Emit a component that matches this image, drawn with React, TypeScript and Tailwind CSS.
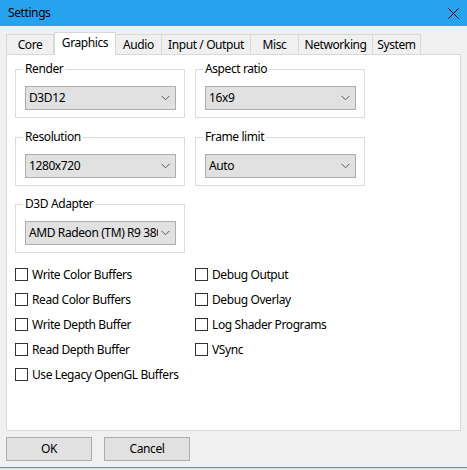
import React from 'react';

const font = { fontFamily: '"Noto Sans", "Segoe UI", sans-serif' };

const tabs = [
  { label: 'Core', w: 'w-[48px]', first: true },
  { label: 'Graphics', w: 'w-[62px]', active: true },
  { label: 'Audio', w: 'w-[46px]' },
  { label: 'Input / Output', w: 'w-[89px]' },
  { label: 'Misc', w: 'w-[48px]' },
  { label: 'Networking', w: 'w-[74px]' },
  { label: 'System', w: 'w-[48px]' },
];

function Chevron() {
  return (
    <svg width="9" height="6" viewBox="0 0 9 6" className="shrink-0">
      <path d="M0.5 0.8 L4.5 4.8 L8.5 0.8" fill="none" stroke="#5a5a5a" strokeWidth="1" />
    </svg>
  );
}

function Combo({ value }: { value: string }) {
  return (
    <div className="flex items-center h-[24px] w-[151px] border border-[#adadad] bg-[#e1e1e1] pl-[3px] pr-[5px]">
      <span className="flex-1 overflow-hidden whitespace-nowrap mr-[3px]">{value}</span>
      <Chevron />
    </div>
  );
}

function Group({ title, value }: { title: string; value: string }) {
  return (
    <div className="relative w-[170px] h-[49px] border border-[#dcdcdc] pt-[16px] pl-[9px]">
      <span className="absolute -top-[9px] left-[7px] bg-white px-[2px] leading-[16px]">{title}</span>
      <Combo value={value} />
    </div>
  );
}

function Check({ label }: { label: string }) {
  return (
    <div className="flex items-center h-[13px] gap-[4px]">
      <div className="w-[13px] h-[13px] border border-[#333333] bg-white shrink-0" />
      <span className="leading-[13px] whitespace-nowrap">{label}</span>
    </div>
  );
}

export default function App() {
  const left = ['Write Color Buffers', 'Read Color Buffers', 'Write Depth Buffer', 'Read Depth Buffer', 'Use Legacy OpenGL Buffers'];
  const right = ['Debug Output', 'Debug Overlay', 'Log Shader Programs', 'VSync'];

  return (
    <div className="w-[467px] h-[470px] bg-[#f0f0f0] text-[12px] tracking-[-0.4px] text-black overflow-hidden flex flex-col" style={font}>
      {/* Title bar */}
      <div className="h-[26px] bg-[#26a3ef] flex items-center justify-between pl-[8px] pr-[8px] shrink-0">
        <span className="text-[12px]">Settings</span>
        <svg width="11" height="11" viewBox="0 0 11 11">
          <path d="M0.5 0.5 L10.5 10.5 M10.5 0.5 L0.5 10.5" stroke="#000" strokeWidth="1" />
        </svg>
      </div>

      {/* Tabs */}
      <div className="flex items-end h-[22px] mt-[6px] ml-[6px] shrink-0">
        {tabs.map((t) =>
          t.active ? (
            <div
              key={t.label}
              className={`${t.w} h-[23px] -mb-px relative z-10 bg-white border-l border-t border-r border-[#d9d9d9] flex justify-center pt-[2px] leading-[16px]`}
            >
              {t.label}
            </div>
          ) : (
            <div
              key={t.label}
              className={`${t.w} h-[20px] bg-[#f0f0f0] border-t border-r border-[#d9d9d9] ${t.first ? 'border-l' : ''} flex justify-center pt-[2px] leading-[16px]`}
            >
              {t.label}
            </div>
          )
        )}
      </div>

      {/* Pane */}
      <div className="ml-[6px] w-[455px] h-[377px] border border-[#d9d9d9] bg-white pt-[14px] pl-[8px] shrink-0">
        <div className="flex gap-[10px]">
          <Group title="Render" value="D3D12" />
          <Group title="Aspect ratio" value="16x9" />
        </div>
        <div className="flex gap-[10px] mt-[19px]">
          <Group title="Resolution" value="1280x720" />
          <Group title="Frame limit" value="Auto" />
        </div>
        <div className="mt-[18px]">
          <Group title="D3D Adapter" value="AMD Radeon (TM) R9 380" />
        </div>

        <div className="flex mt-[15px]">
          <div className="w-[180px] flex flex-col gap-[12px]">
            {left.map((l) => (
              <Check key={l} label={l} />
            ))}
          </div>
          <div className="flex flex-col gap-[12px]">
            {right.map((l) => (
              <Check key={l} label={l} />
            ))}
          </div>
        </div>
      </div>

      {/* Buttons */}
      <div className="flex gap-[12px] ml-[6px] mt-[6px] shrink-0">
        <button className="w-[86px] h-[24px] border border-[#adadad] bg-[#e1e1e1]">OK</button>
        <button className="w-[86px] h-[24px] border border-[#adadad] bg-[#e1e1e1]">Cancel</button>
      </div>

      <div className="mt-[6px] h-px bg-[#26a3ef] shrink-0" />
      <div className="flex-1 bg-[#e6e6e6]" />
    </div>
  );
}
